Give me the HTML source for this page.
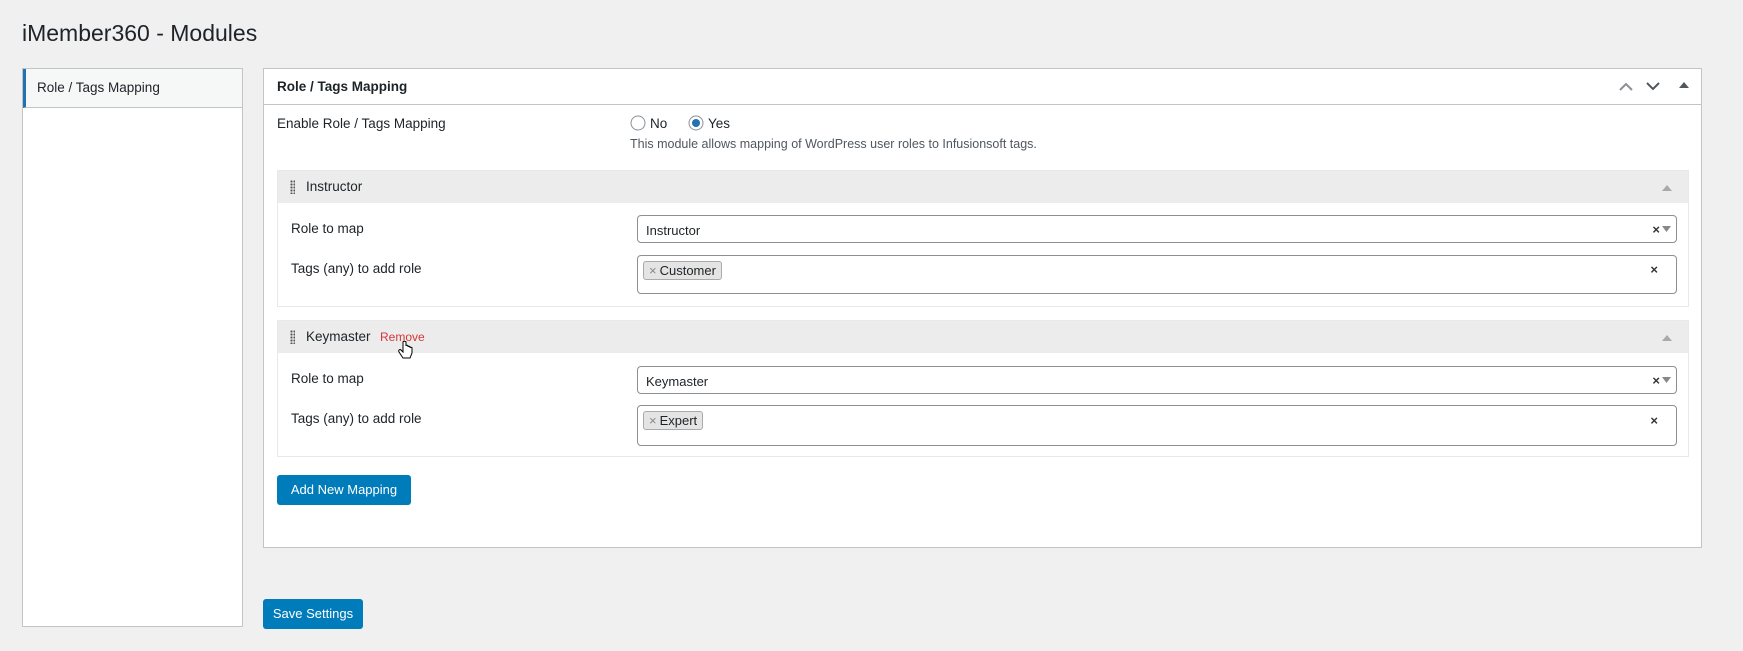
<!DOCTYPE html>
<html><head><meta charset="utf-8"><style>
*{box-sizing:border-box;margin:0;padding:0}
body{width:1743px;height:651px;background:#f0f0f1;font-family:"Liberation Sans",sans-serif;color:#1d2327;font-size:13px;position:relative;overflow:hidden}
.a{position:absolute}
h1{position:absolute;left:22px;top:20px;font-size:23px;font-weight:400;color:#1d2327}
.side{left:22px;top:68px;width:221px;height:559px;background:#fff;border:1px solid #c3c4c7}
.side .it{height:39px;background:#f6f7f7;border-bottom:1px solid #c3c4c7;border-left:3px solid #2271b1;padding:11px 0 0 11px;font-size:13.5px;color:#1d2327}
.panel{left:263px;top:68px;width:1439px;height:480px;background:#fff;border:1px solid #c3c4c7}
.ph{position:absolute;left:0;top:0;right:0;height:36px;border-bottom:1px solid #c3c4c7}
.box{position:absolute;left:13px;width:1412px;border:1px solid #e8e8e8;background:#fff}
.bh{height:32px;background:#ececec;position:relative}
.lbl{position:absolute;font-size:13.5px}
.sel{position:absolute;left:359px;width:1040px;border:1px solid #8c8f94;border-radius:4px;background:#fff}
.chip{position:absolute;left:5px;top:5px;height:19px;border:1px solid #aaa;border-radius:3px;background:#e4e4e4;padding:1px 5px 0 5px;font-size:13px}
.chip b{color:#888;font-weight:400;margin-right:3px}
.x{position:absolute;right:18px;font-size:13px;font-weight:bold;color:#333}
.btn{position:absolute;background:#007cba;color:#fff;border-radius:3px;font-size:13px;text-align:center}
.dots{position:absolute;left:12px;top:9px;width:5px;height:14px;background-image:radial-gradient(circle,#555 1px,transparent 1.2px);background-size:3px 3px}
</style></head><body>
<h1>iMember360 - Modules</h1>
<div class="a side"><div class="it">Role / Tags Mapping</div></div>
<div class="a panel">
 <div class="ph">
  <div class="lbl" style="left:13px;top:10px;font-weight:bold;font-size:13.5px">Role / Tags Mapping</div>
  <svg class="a" style="left:1354px;top:12px" width="16" height="12"><path d="M2 9 L8 3 L14 9" stroke="#8c8f94" stroke-width="2" fill="none"/></svg>
  <svg class="a" style="left:1381px;top:11px" width="16" height="12"><path d="M2 3 L8 9 L14 3" stroke="#50575e" stroke-width="2" fill="none"/></svg>
  <svg class="a" style="left:1415px;top:12px" width="10" height="8"><path d="M0 7 L5 1 L10 7Z" fill="#50575e"/></svg>
 </div>
 <div class="lbl" style="left:13px;top:47px">Enable Role / Tags Mapping</div>
 <svg class="a" style="left:366px;top:46px" width="16" height="16"><circle cx="8" cy="8" r="7" fill="#fff" stroke="#8c8f94"/></svg>
 <div class="lbl" style="left:386px;top:47px">No</div>
 <svg class="a" style="left:424px;top:46px" width="16" height="16"><circle cx="8" cy="8" r="7" fill="#fff" stroke="#8c8f94"/><circle cx="8" cy="8" r="4" fill="#2271b1"/></svg>
 <div class="lbl" style="left:444px;top:47px">Yes</div>
 <div class="lbl" style="left:366px;top:68px;color:#50575e;font-size:12.5px">This module allows mapping of WordPress user roles to Infusionsoft tags.</div>

 <div class="box" style="top:101px;height:137px">
  <div class="bh"><div class="dots"></div><div class="lbl" style="left:28px;top:8px">Instructor</div>
   <svg class="a" style="left:1384px;top:13px" width="10" height="7"><path d="M0 7 L5 1 L10 7Z" fill="#a7aaad"/></svg></div>
  <div class="lbl" style="left:13px;top:50px">Role to map</div>
  <div class="sel" style="top:44px;height:28px"><div class="lbl" style="left:8px;top:7px;font-size:13px">Instructor</div><div class="x" style="top:6px;right:16px">×</div><svg class="a" style="right:5px;top:10px" width="9" height="6"><path d="M0 0 L9 0 L4.5 6Z" fill="#888"/></svg></div>
  <div class="lbl" style="left:13px;top:90px">Tags (any) to add role</div>
  <div class="sel" style="top:84px;height:39px"><div class="chip"><b>×</b>Customer</div><div class="x" style="top:6px">×</div></div>
 </div>

 <div class="box" style="top:251px;height:137px">
  <div class="bh"><div class="dots"></div><div class="lbl" style="left:28px;top:8px">Keymaster</div><div class="lbl" style="left:102px;top:9px;color:#d63638;font-size:12px">Remove</div>
   <svg class="a" style="left:1384px;top:13px" width="10" height="7"><path d="M0 7 L5 1 L10 7Z" fill="#a7aaad"/></svg></div>
  <div class="lbl" style="left:13px;top:50px">Role to map</div>
  <div class="sel" style="top:45px;height:28px"><div class="lbl" style="left:8px;top:7px;font-size:13px">Keymaster</div><div class="x" style="top:6px;right:16px">×</div><svg class="a" style="right:5px;top:10px" width="9" height="6"><path d="M0 0 L9 0 L4.5 6Z" fill="#888"/></svg></div>
  <div class="lbl" style="left:13px;top:90px">Tags (any) to add role</div>
  <div class="sel" style="top:84px;height:41px"><div class="chip"><b>×</b>Expert</div><div class="x" style="top:7px">×</div></div>
 </div>
 <svg class="a" style="left:134px;top:272px" width="16" height="20"><path d="M5 1 v10 l-2-2 c-1-1-3 0-2 2 l4 6 h7 l2-5 v-5 c0-1-2-1-2 0 v-1 c0-1-2-1-2 0 v-1 c0-1-2-1-2 0 v-4 c0-1-3-1-3 0z" fill="#fff" stroke="#000" stroke-width="1"/></svg>
 <div class="btn" style="left:13px;top:406px;width:134px;height:30px;line-height:30px">Add New Mapping</div>
</div>
<div class="btn" style="left:263px;top:599px;width:100px;height:30px;line-height:30px">Save Settings</div>
</body></html>
